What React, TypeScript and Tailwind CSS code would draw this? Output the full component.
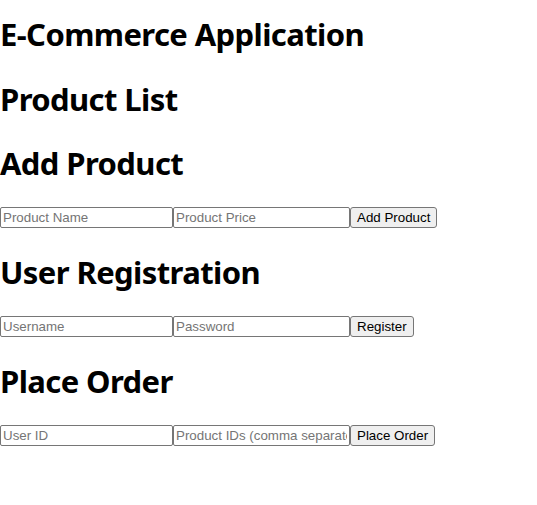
function Heading({ children, className = "" }: { children: React.ReactNode; className?: string }) {
  return (
    <h2
      className={`m-0 h-[43px] text-[31px] leading-[45px] tracking-[-0.6px] font-bold text-black whitespace-nowrap ${className}`}
      style={{ fontFamily: '"Noto Sans", "Open Sans", sans-serif' }}
    >
      {children}
    </h2>
  );
}

function FormRow({ first, second, button }: { first: string; second: string; button: string }) {
  const inputCls =
    "h-[21px] border border-[#767676] rounded-[2px] px-[2px] py-[1px] text-[13.33px] leading-[15px] text-black placeholder:text-[#757575] bg-white outline-none";
  return (
    <div className="flex items-start h-[21px]" style={{ fontFamily: '"Liberation Sans", Arial, sans-serif' }}>
      <input className={`${inputCls} w-[173px]`} placeholder={first} />
      <input className={`${inputCls} w-[177px]`} placeholder={second} />
      <button className="h-[21px] border border-[#767676] rounded-[3px] bg-[#efefef] px-[6px] text-[13.33px] leading-[15px] text-black">
        {button}
      </button>
    </div>
  );
}

export default function App() {
  return (
    <div className="w-[537px] h-[505px] bg-white flex flex-col pt-[12px]">
      <Heading>E-Commerce Application</Heading>
      <Heading className="mt-[22px]">Product List</Heading>
      <Heading className="mt-[21px]">Add Product</Heading>
      <div className="mt-[23px]">
        <FormRow first="Product Name" second="Product Price" button="Add Product" />
      </div>
      <Heading className="mt-[22px]">User Registration</Heading>
      <div className="mt-[23px]">
        <FormRow first="Username" second="Password" button="Register" />
      </div>
      <Heading className="mt-[22px]">Place Order</Heading>
      <div className="mt-[23px]">
        <FormRow first="User ID" second="Product IDs (comma separated)" button="Place Order" />
      </div>
    </div>
  );
}
